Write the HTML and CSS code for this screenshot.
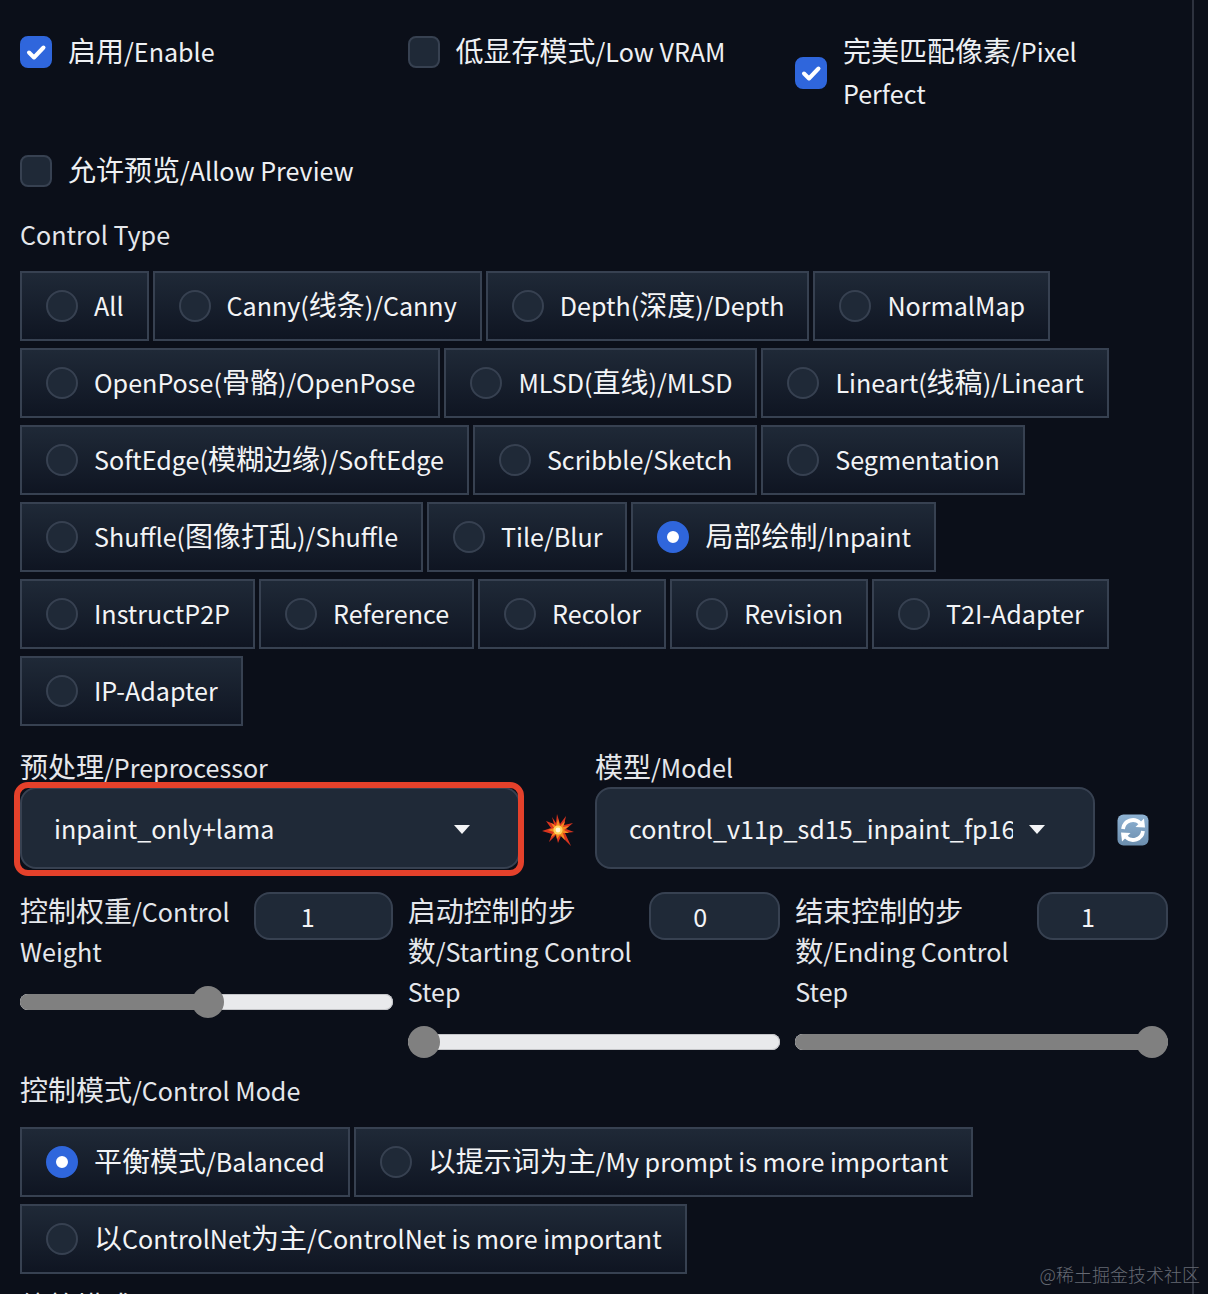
FILE: index.html
```html
<!DOCTYPE html>
<html lang="en">
<head>
    <meta charset="utf-8">
    <title>ControlNet</title>
    <link rel="stylesheet" href="styles.css">
</head>
<body>
<div class="panel">
    <!-- Top checkboxes -->
    <div class="checks">
        <label class="check">
            <span class="box on"><svg viewBox="0 0 32 32" width="32" height="32"><path d="M9 16.5l5 5 9.5-10" fill="none" stroke="#fff" stroke-width="4" stroke-linecap="round" stroke-linejoin="round"/></svg></span>
            <span class="check-text"><span class="zh">启用</span>/Enable</span>
        </label>
        <label class="check">
            <span class="box"></span>
            <span class="check-text"><span class="zh">低显存模式</span>/Low VRAM</span>
        </label>
        <label class="check">
            <span class="box on"><svg viewBox="0 0 32 32" width="32" height="32"><path d="M9 16.5l5 5 9.5-10" fill="none" stroke="#fff" stroke-width="4" stroke-linecap="round" stroke-linejoin="round"/></svg></span>
            <span class="check-text check-long"><span class="zh">完美匹配像素</span>/Pixel Perfect</span>
        </label>
    </div>
    <label class="check preview">
        <span class="box"></span>
        <span class="check-text"><span class="zh">允许预览</span>/Allow Preview</span>
    </label>

    <!-- Control type -->
    <div class="label type-label">Control Type</div>
    <div class="radios">
        <label class="radio"><span class="dot"></span><span>All</span></label>
        <label class="radio"><span class="dot"></span><span>Canny(<span class="zh">线条</span>)/Canny</span></label>
        <label class="radio"><span class="dot"></span><span>Depth(<span class="zh">深度</span>)/Depth</span></label>
        <label class="radio"><span class="dot"></span><span>NormalMap</span></label>
        <label class="radio"><span class="dot"></span><span>OpenPose(<span class="zh">骨骼</span>)/OpenPose</span></label>
        <label class="radio"><span class="dot"></span><span>MLSD(<span class="zh">直线</span>)/MLSD</span></label>
        <label class="radio"><span class="dot"></span><span>Lineart(<span class="zh">线稿</span>)/Lineart</span></label>
        <label class="radio"><span class="dot"></span><span>SoftEdge(<span class="zh">模糊边缘</span>)/SoftEdge</span></label>
        <label class="radio"><span class="dot"></span><span>Scribble/Sketch</span></label>
        <label class="radio"><span class="dot"></span><span>Segmentation</span></label>
        <label class="radio"><span class="dot"></span><span>Shuffle(<span class="zh">图像打乱</span>)/Shuffle</span></label>
        <label class="radio"><span class="dot"></span><span>Tile/Blur</span></label>
        <label class="radio"><span class="dot on"></span><span><span class="zh">局部绘制</span>/Inpaint</span></label>
        <label class="radio"><span class="dot"></span><span>InstructP2P</span></label>
        <label class="radio"><span class="dot"></span><span>Reference</span></label>
        <label class="radio"><span class="dot"></span><span>Recolor</span></label>
        <label class="radio"><span class="dot"></span><span>Revision</span></label>
        <label class="radio"><span class="dot"></span><span>T2I-Adapter</span></label>
        <label class="radio"><span class="dot"></span><span>IP-Adapter</span></label>
    </div>

    <!-- Preprocessor and model -->
    <div class="models">
        <div class="model-col">
            <div class="label"><span class="zh">预处理</span>/Preprocessor</div>
            <div class="select">
                <span class="select-text">inpaint_only+lama</span>
                <span class="caret"></span>
                <span class="highlight"></span>
            </div>
        </div>
        <div class="icon-col">
            <svg viewBox="0 0 32 32" width="32" height="32">
                <polygon points="15,0 18,10 24,2 22,11 31,9 24,15 32,18 23,19 29,32 19,22 16,29 14,21 7,28 10,20 0,17 9,14 4,7 12,10 10,3 14,9" fill="#d9341f"/>
                <polygon points="16,5 18,12 23,7 21,13 27,12 22,16 27,19 21,19 23,26 18,21 15,25 14,20 9,23 12,18 6,16 12,14 9,9 14,12" fill="#f58a1f"/>
                <circle cx="16" cy="16" r="4.6" fill="#ffd35c"/>
                <circle cx="16" cy="16" r="2.4" fill="#fff8d8"/>
            </svg>
        </div>
        <div class="model-col">
            <div class="label"><span class="zh">模型</span>/Model</div>
            <div class="select">
                <span class="select-text">control_v11p_sd15_inpaint_fp16 [be8bc0ed]</span>
                <span class="caret"></span>
            </div>
        </div>
        <div class="icon-col">
            <svg viewBox="0 0 32 32" width="32" height="32">
                <defs>
                    <linearGradient id="refresh-bg" x1="0" y1="0" x2="0" y2="1">
                        <stop offset="0" stop-color="#8fb3d4"/>
                        <stop offset="1" stop-color="#6c8eae"/>
                    </linearGradient>
                </defs>
                <rect x="0.5" y="0.5" width="31" height="31" rx="6" fill="url(#refresh-bg)"/>
                <path d="M6 15a10 10 0 0 1 17-6" fill="none" stroke="#fff" stroke-width="3.8"/>
                <polygon points="18.5,13 28,13.5 27,4.5" fill="#fff"/>
                <path d="M26 17a10 10 0 0 1-17 6" fill="none" stroke="#fff" stroke-width="3.8"/>
                <polygon points="13.5,19 4,18.5 5,27.5" fill="#fff"/>
            </svg>
        </div>
    </div>

    <!-- Sliders -->
    <div class="sliders">
        <div class="slider">
            <div class="slider-top">
                <div class="slider-label"><span class="zh">控制权重</span>/Control Weight</div>
                <div class="number wide">1</div>
            </div>
            <div class="track"><div class="fill" style="width: 50.4%"></div><span class="thumb mid" style="left: 50.4%"></span></div>
        </div>
        <div class="slider">
            <div class="slider-top">
                <div class="slider-label"><span class="zh">启动控制的步数</span>/Starting Control Step</div>
                <div class="number">0</div>
            </div>
            <div class="track"><div class="fill" style="width: 0%"></div><span class="thumb start"></span></div>
        </div>
        <div class="slider">
            <div class="slider-top">
                <div class="slider-label"><span class="zh">结束控制的步数</span>/Ending Control Step</div>
                <div class="number">1</div>
            </div>
            <div class="track"><div class="fill" style="width: 100%"></div><span class="thumb end"></span></div>
        </div>
    </div>

    <!-- Control mode -->
    <div class="label mode-label"><span class="zh">控制模式</span>/Control Mode</div>
    <div class="radios mode-radios">
        <label class="radio"><span class="dot on"></span><span><span class="zh">平衡模式</span>/Balanced</span></label>
        <label class="radio"><span class="dot"></span><span><span class="zh">以提示词为主</span>/My prompt is more important</span></label>
        <label class="radio"><span class="dot"></span><span><span class="zh">以</span>ControlNet<span class="zh">为主</span>/ControlNet is more important</span></label>
    </div>
    <div class="label resize-label"><span class="zh">缩放模式</span>/Resize Mode</div>
</div>
<div class="watermark">@稀土掘金技术社区</div>
</body>
</html>
```

FILE: styles.css
```css
* {
    box-sizing: border-box;
}

html, body {
    margin: 0;
    height: 1294px;
    overflow: hidden;
}

body {
    position: relative;
    background-color: #0b0f19;
    color: #f3f4f6;
    font-family: "Noto Sans CJK SC", "Noto Sans", sans-serif;
    font-size: 25.1px;
    line-height: 40px;
}

/* Chinese runs sit larger than the latin next to them */
.zh {
    font-size: 28px;
    line-height: 1;
}

/* Settings column with the thin line on its right */
.panel {
    width: 1194px;
    height: 1294px;
    padding: 31px 0 0 20px;
    border-right: 2px solid #2d323e;
}

.label {
    color: #e5e7eb;
    height: 40px;
}

/* Checkboxes */
.checks {
    display: grid;
    grid-template-columns: repeat(3, minmax(0, 1fr));
    gap: 14.5px;
    width: 1148px;
}

.check {
    display: flex;
    align-items: center;
    align-self: start;
    gap: 16px;
    line-height: 42px;
    color: #eef0f3;
}

.check-text {
    margin: -1px 0 1px;
}

.check-long {
    width: 250px;
}

.box {
    flex: none;
    width: 32px;
    height: 32px;
    border-radius: 8px;
    border: 2px solid #374151;
    background-color: #1f2937;
}

.box svg {
    display: block;
    margin: -2px;
}

.box.on {
    background-color: #2f66dc;
    border-color: #2f66dc;
}

.preview {
    margin-top: 35px;
}

.type-label {
    margin-top: 22px;
}

/* Radio groups */
.radios {
    display: flex;
    flex-wrap: wrap;
    gap: 7px 4px;
    width: 1148px;
    margin-top: 17px;
}

.mode-radios {
    margin-top: 17px;
}

.radio {
    display: flex;
    align-items: center;
    height: 70px;
    padding: 0 23px 0 24px;
    border: 2px solid #374151;
    background: linear-gradient(180deg, #1f2937, #0f1522);
    white-space: nowrap;
}

.dot + span {
    margin-top: -2px;
}

.dot {
    flex: none;
    width: 32px;
    height: 32px;
    margin-right: 16px;
    border-radius: 50%;
    border: 2px solid #374151;
    background-color: #1f2937;
}

.dot.on {
    border: 10px solid #2f66dc;
    background-color: #fff;
}

/* Preprocessor and model selects */
.models {
    display: flex;
    margin-top: 21px;
}

.model-col {
    width: 500px;
}

.icon-col {
    width: 75px;
    height: 82px;
    margin-top: 42px;
    display: flex;
    align-items: center;
    justify-content: center;
}

.select {
    position: relative;
    display: flex;
    align-items: center;
    height: 82px;
    padding: 0 48px 0 32px;
    border: 2px solid #374151;
    border-radius: 16px;
    background-color: #1f2937;
}

.select-text {
    flex: 1;
    overflow: hidden;
    white-space: nowrap;
}

.caret {
    flex: none;
    width: 0;
    height: 0;
    margin: 2px 0 0 16px;
    border-left: 8px solid transparent;
    border-right: 8px solid transparent;
    border-top: 9px solid #f3f4f6;
}

.highlight {
    position: absolute;
    top: -7px;
    left: -8px;
    right: -6px;
    bottom: -9px;
    border: 6px solid #e5412b;
    border-radius: 14px;
}

/* Sliders */
.sliders {
    display: grid;
    grid-template-columns: repeat(3, minmax(0, 1fr));
    gap: 15px;
    width: 1148px;
    margin-top: 20px;
}

.slider-top {
    display: flex;
    justify-content: space-between;
    align-items: flex-start;
}

.slider-label {
    width: 236px;
    color: #e5e7eb;
}

.number {
    flex: none;
    width: 131px;
    height: 48px;
    margin-top: 1px;
    padding-left: 42px;
    line-height: 44px;
    border: 2px solid #374151;
    border-radius: 16px;
    background-color: #1f2937;
}

.number.wide {
    width: 139px;
    padding-left: 45px;
}

.track {
    position: relative;
    height: 16px;
    margin-top: 23px;
    border-radius: 8px;
    background-color: #e9eaec;
    box-shadow: inset 0 0 0 1px #c4c5c8;
}

.fill {
    height: 16px;
    border-radius: 8px;
    background-color: #808080;
}

.thumb {
    position: absolute;
    top: -8px;
    width: 32px;
    height: 32px;
    border-radius: 50%;
    background-color: #808080;
}

.thumb.mid {
    margin-left: -16px;
}

.thumb.start {
    left: 0;
}

.thumb.end {
    right: 0;
}

.mode-label {
    margin-top: 20px;
}

.resize-label {
    margin-top: 12px;
}

.watermark {
    position: absolute;
    right: 8px;
    top: 1261px;
    color: #666a73;
    font-family: "Noto Sans CJK SC", sans-serif;
    font-weight: 300;
    font-size: 18px;
    line-height: 26px;
}
```
